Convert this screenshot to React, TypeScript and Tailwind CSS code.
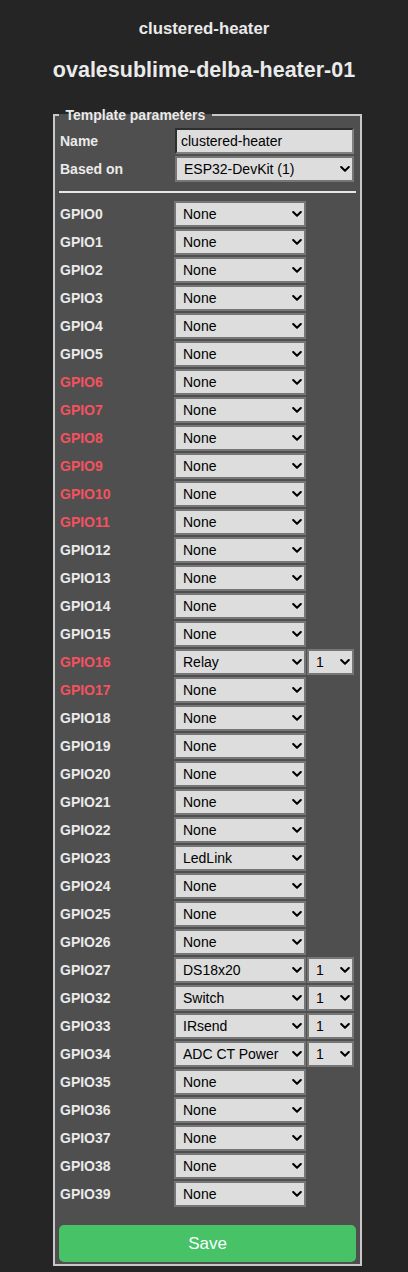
import React from "react";

const gpios = [
  0, 1, 2, 3, 4, 5, 6, 7, 8, 9, 10, 11, 12, 13, 14, 15, 16, 17, 18, 19, 20, 21,
  22, 23, 24, 25, 26, 27, 32, 33, 34, 35, 36, 37, 38, 39,
];
const red = new Set([6, 7, 8, 9, 10, 11, 16, 17]);
const values: Record<number, string> = {
  16: "Relay",
  23: "LedLink",
  27: "DS18x20",
  32: "Switch",
  33: "IRsend",
  34: "ADC CT Power",
};
const indexed = new Set([16, 27, 32, 33, 34]);
const options = ["None", "Relay", "LedLink", "DS18x20", "Switch", "IRsend", "ADC CT Power"];

function Chevron() {
  return (
    <svg
      className="pointer-events-none absolute right-[4px] top-1/2 -translate-y-1/2"
      width="10"
      height="7"
      viewBox="0 0 10 7"
    >
      <polyline
        points="1.2,1.5 5,5.2 8.8,1.5"
        fill="none"
        stroke="#000"
        strokeWidth="2.1"
        strokeLinecap="round"
        strokeLinejoin="round"
      />
    </svg>
  );
}

function Select({
  width,
  value,
  opts,
  className = "",
}: {
  width: string;
  value: string;
  opts: string[];
  className?: string;
}) {
  return (
    <div className={"relative h-[26px] " + width + " " + className}>
      <select
        defaultValue={value}
        className="appearance-none w-full h-[26px] border-2 border-[#767676] bg-[#dddddd] text-black text-[14px] pl-[7px] pr-[14px] outline-none"
      >
        {opts.map((o) => (
          <option key={o}>{o}</option>
        ))}
      </select>
      <Chevron />
    </div>
  );
}

export default function App() {
  return (
    <div className="min-h-[1272px] bg-[#252525] text-[#eaeaea] font-['Liberation_Sans',Arial,sans-serif] pb-[6px]">
      <h3 className="pt-[19px] text-center text-[16.8px] leading-[20px] font-bold">
        clustered-heater
      </h3>
      <h2 className="mt-[19px] text-center text-[21.5px] leading-[25px] font-bold">
        ovalesublime-delba-heater-01
      </h2>
      <fieldset className="mt-[24px] ml-[53px] w-[309px] border-2 border-[#c8c8c8] bg-[#4f4f4f] px-[4px] pt-[5px] pb-[2px]">
        <legend className="px-[6.5px] text-[14px] leading-[16px] font-bold text-[#eaeaea]">
          Template parameters
        </legend>
        <div className="flex flex-col gap-[2px]">
          <div className="flex items-center h-[26px]">
            <span className="w-[116px] pl-[1px] text-[14px] font-bold">Name</span>
            <input
              defaultValue="clustered-heater"
              className="w-[179px] h-[26px] border-2 border-t-[#2e2e2e] border-l-[#2e2e2e] border-r-[#808080] border-b-[#808080] bg-[#dddddd] text-black text-[14px] px-[4px] outline-none"
            />
          </div>
          <div className="flex items-center h-[26px]">
            <span className="w-[116px] pl-[1px] text-[14px] font-bold">Based on</span>
            <Select width="w-[179px]" value="ESP32-DevKit (1)" opts={["ESP32-DevKit (1)"]} />
          </div>
        </div>
        <div className="mt-[9px] mb-[8px] h-[2px] bg-[#e6e6e6]" />
        <div className="flex flex-col gap-[2px]">
          {gpios.map((g) => (
            <div key={g} className="flex items-center h-[26px]">
              <span
                className={
                  red.has(g)
                    ? "w-[115px] pl-[1px] text-[14px] font-bold text-[#f4525e]"
                    : "w-[115px] pl-[1px] text-[14px] font-bold text-[#eaeaea]"
                }
              >
                GPIO{g}
              </span>
              <Select width="w-[132px]" value={values[g] ?? "None"} opts={options} />
              {indexed.has(g) && (
                <Select width="w-[47px]" className="ml-[1px]" value="1" opts={["1", "2"]} />
              )}
            </div>
          ))}
        </div>
        <button className="mt-[18px] w-full h-[37px] rounded-[5px] bg-[#47c266] text-[#faffff] text-[17px] leading-[37px]">
          Save
        </button>
      </fieldset>
    </div>
  );
}
